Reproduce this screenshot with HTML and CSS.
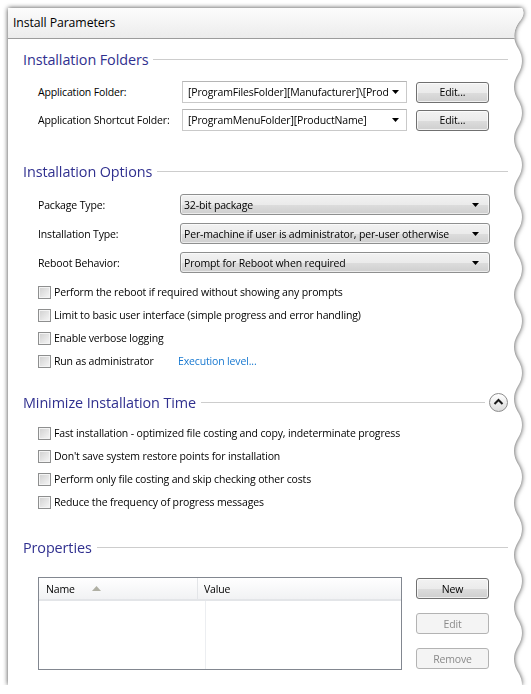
FILE: index.html
```html
<!DOCTYPE html>
<html>
<head>
<meta charset="utf-8">
<link rel="stylesheet" href="styles.css">
</head>
<body>
<div class="stage">
  <div class="shadow">
    <div class="paper">
      <div class="header">Install Parameters</div>
      <div class="content">

        <div class="sec-title t1"><span>Installation Folders</span><i class="rule"></i></div>
        <div class="frow r1">
          <span class="lbl">Application Folder:</span>
          <div class="combo"><span class="ctext">[ProgramFilesFolder][Manufacturer]\[ProductName]</span><svg class="arr" width="7" height="4" viewBox="0 0 7 4"><path d="M0 0h7L3.5 4z"/></svg></div>
          <button class="btn">Edit...</button>
        </div>
        <div class="frow r2">
          <span class="lbl">Application Shortcut Folder:</span>
          <div class="combo"><span class="ctext">[ProgramMenuFolder][ProductName]</span><svg class="arr" width="7" height="4" viewBox="0 0 7 4"><path d="M0 0h7L3.5 4z"/></svg></div>
          <button class="btn">Edit...</button>
        </div>

        <div class="sec-title t2"><span>Installation Options</span><i class="rule"></i></div>
        <div class="drow d1">
          <span class="lbl">Package Type:</span>
          <div class="dd"><span>32-bit package</span><svg class="arr" width="7" height="4" viewBox="0 0 7 4"><path d="M0 0h7L3.5 4z"/></svg></div>
        </div>
        <div class="drow d2">
          <span class="lbl">Installation Type:</span>
          <div class="dd"><span>Per-machine if user is administrator, per-user otherwise</span><svg class="arr" width="7" height="4" viewBox="0 0 7 4"><path d="M0 0h7L3.5 4z"/></svg></div>
        </div>
        <div class="drow d3">
          <span class="lbl">Reboot Behavior:</span>
          <div class="dd"><span>Prompt for Reboot when required</span><svg class="arr" width="7" height="4" viewBox="0 0 7 4"><path d="M0 0h7L3.5 4z"/></svg></div>
        </div>

        <div class="checks c1">
          <div class="chk"><i class="box"></i><span>Perform the reboot if required without showing any prompts</span></div>
          <div class="chk"><i class="box"></i><span>Limit to basic user interface (simple progress and error handling)</span></div>
          <div class="chk"><i class="box"></i><span>Enable verbose logging</span></div>
          <div class="chk"><i class="box"></i><span class="w-adm">Run as administrator</span><a class="link">Execution level...</a></div>
        </div>

        <div class="sec-title t3"><span>Minimize Installation Time</span><i class="rule"></i>
          <span class="collapse"><svg width="17" height="17" viewBox="0 0 17 17"><polyline points="4.5,10 8.5,6 12.5,10" fill="none" stroke="#1a1a1a" stroke-width="2"/></svg></span>
        </div>
        <div class="checks c2">
          <div class="chk"><i class="box"></i><span>Fast installation - optimized file costing and copy, indeterminate progress</span></div>
          <div class="chk"><i class="box"></i><span>Don't save system restore points for installation</span></div>
          <div class="chk"><i class="box"></i><span>Perform only file costing and skip checking other costs</span></div>
          <div class="chk"><i class="box"></i><span>Reduce the frequency of progress messages</span></div>
        </div>

        <div class="sec-title t4"><span>Properties</span><i class="rule"></i></div>
        <div class="props">
          <div class="list">
            <div class="lhead">
              <div class="col c-name">Name<svg class="sort" width="9" height="5" viewBox="0 0 9 5"><path d="M0 5L4.5 0 9 5z"/></svg></div>
              <div class="col c-val">Value</div>
            </div>
            <div class="lbody">
              <div class="bcol c-name"></div>
              <div class="bcol c-val"></div>
            </div>
          </div>
          <div class="pbtns">
            <button class="btn">New</button>
            <button class="btn" disabled>Edit</button>
            <button class="btn" disabled>Remove</button>
          </div>
        </div>

      </div>
    </div>
  </div>
</div>
</body>
</html>
```
FILE: styles.css
```css
html, body {
  margin: 0;
  background: #fff;
}
body {
  font-family: "Open Sans", "Noto Sans", sans-serif;
  font-size: 10.5px;
  letter-spacing: -0.15px;
  color: #000;
}
.stage {
  padding: 8px 0 0 8px;
}
.shadow {
  width: 517px;
  height: 677px;
  filter: drop-shadow(0 0 2.5px rgba(0, 0, 0, 0.75));
}
.paper {
  width: 100%;
  height: 100%;
  background: #fff;
  clip-path: path('M0 0 H514 Q518 6 511 14 Q502 27 510 40 T510 66 T510 92 T510 118 T510 144 T510 170 T510 196 T510 222 T510 248 T510 274 T510 300 T510 326 T510 352 T510 378 T510 404 T510 430 T510 456 T510 482 T510 508 T510 534 T510 560 T510 586 T510 612 T510 638 T510 664 T510 690 L510 700 L0 700 Z');
}
.header {
  height: 30px;
  border-bottom: 1px solid #9c9c9c;
  background: linear-gradient(#fcfcfc, #ececec);
  font-size: 12.3px;
  letter-spacing: -0.1px;
  line-height: 30px;
  padding-left: 5px;
}
.content {
  padding: 0 17px 0 15px;
  display: flex;
  flex-direction: column;
}

/* section titles */
.sec-title {
  height: 20px;
  display: flex;
  align-items: center;
  font-size: 14.4px;
  letter-spacing: -0.1px;
  color: #30308f;
  white-space: nowrap;
}
.rule {
  flex: 1;
  height: 1px;
  background: #cdcdcd;
  margin-left: 5px;
}
.t1 { margin-top: 10px; }
.t2 { margin-top: 30px; }
.t3 { margin-top: 20px; }
.t4 { margin-top: 24px; }

.collapse {
  width: 19px;
  height: 19px;
  box-sizing: border-box;
  border: 1px solid #8c8c8c;
  border-radius: 50%;
  background: linear-gradient(#ffffff, #dcdcdc);
  margin-left: 4px;
  display: flex;
  align-items: center;
  justify-content: center;
}

/* folder rows */
.frow {
  display: grid;
  grid-template-columns: 144px 225px 82px;
  align-items: center;
  height: 22px;
  padding-left: 15px;
}
.frow .btn {
  margin-left: 9px;
}
.r1 { margin-top: 12px; }
.r2 { margin-top: 6px; }
.lbl {
  white-space: nowrap;
}
.combo {
  height: 22px;
  box-sizing: border-box;
  border: 1px solid #c9c9c9;
  border-top-color: #b5b5b5;
  background: #fff;
  display: flex;
  align-items: center;
  padding: 0 7px 0 5px;
}
.ctext {
  flex: 1;
  overflow: hidden;
  white-space: nowrap;
  margin-right: 4px;
}
.arr {
  flex: none;
  display: block;
}
.arr path { fill: #000; }

.btn {
  font-family: inherit;
  font-size: 10.5px;
  letter-spacing: -0.15px;
  color: #000;
  height: 21px;
  padding: 0;
  box-sizing: border-box;
  border: 1px solid #707070;
  border-radius: 3px;
  background: linear-gradient(#f2f2f2 0%, #ebebeb 50%, #dddddd 51%, #cfcfcf 100%);
  box-shadow: inset 0 0 0 1px rgba(255, 255, 255, 0.7);
}
.btn:disabled {
  color: #8a8a8a;
  border-color: #b3b3b3;
  background: #f4f4f4;
  box-shadow: none;
}

/* dropdown rows */
.drow {
  display: grid;
  grid-template-columns: 142px 310px;
  align-items: center;
  height: 21px;
  padding-left: 15px;
}
.d1 { margin-top: 13px; }
.d2, .d3 { margin-top: 8px; }
.dd {
  height: 21px;
  box-sizing: border-box;
  border: 1px solid #8e8f8f;
  border-radius: 3px;
  background: linear-gradient(#f2f2f2 0%, #ebebeb 50%, #dddddd 51%, #cfcfcf 100%);
  box-shadow: inset 0 0 0 1px rgba(255, 255, 255, 0.6);
  display: flex;
  align-items: center;
  justify-content: space-between;
  padding: 0 10px 0 3px;
  white-space: nowrap;
}

/* checkboxes */
.checks {
  display: flex;
  flex-direction: column;
  gap: 1px;
  padding-left: 15px;
}
.c1 { margin-top: 8px; }
.c2 { margin-top: 10px; }
.chk {
  height: 22px;
  display: flex;
  align-items: center;
  white-space: nowrap;
}
.box {
  width: 13px;
  height: 13px;
  box-sizing: border-box;
  border: 1px solid #8e8f8f;
  background: linear-gradient(135deg, #cfcfcf, #f7f7f7);
  box-shadow: inset 0 0 0 1px #f4f4f4;
  margin-right: 3px;
  flex: none;
}
.w-adm {
  width: 124px;
}
.link {
  color: #1778d0;
  cursor: pointer;
}

/* properties */
.props {
  margin-top: 20px;
  padding-left: 15px;
  display: grid;
  grid-template-columns: 364px 73px;
  column-gap: 14px;
  align-items: start;
}
.list {
  height: 93px;
  box-sizing: border-box;
  border: 1px solid #828790;
  display: flex;
  flex-direction: column;
  background: #fff;
}
.lhead {
  height: 23px;
  display: flex;
  background: linear-gradient(#ffffff, #f1f2f4);
  border-bottom: 2px solid #e3e5e8;
  box-sizing: border-box;
}
.col {
  display: flex;
  align-items: center;
  box-sizing: border-box;
}
.c-name {
  width: 159px;
  border-right: 1px solid #e3e5e8;
  padding-left: 7px;
}
.c-val {
  flex: 1;
  padding-left: 6px;
}
.sort {
  margin-left: 17px;
  display: block;
}
.sort path { fill: #b0b0a4; }
.lbody {
  flex: 1;
  display: flex;
}
.bcol.c-name {
  border-right: 1px solid #eceef1;
}
.pbtns {
  display: flex;
  flex-direction: column;
  gap: 14px;
  padding-top: 1px;
}
.pbtns .btn {
  height: 21px;
}
```
